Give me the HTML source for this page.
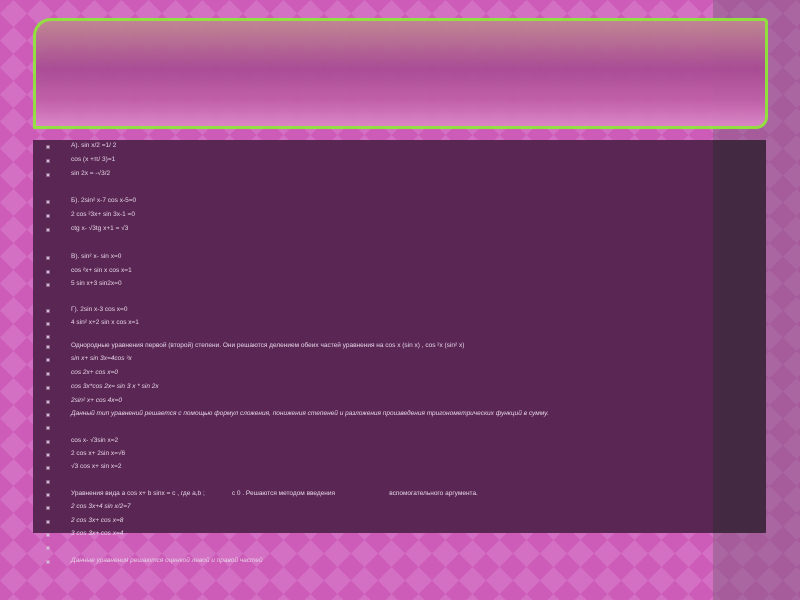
<!DOCTYPE html>
<html><head><meta charset="utf-8"><style>
*{margin:0;padding:0}
body{width:800px;height:600px;overflow:hidden;position:relative;background:#cc5cb8;font-family:"Liberation Sans","DejaVu Sans",sans-serif}
svg.bg{position:absolute;left:0;top:0}
.title{position:absolute;left:33px;top:18px;width:729px;height:105px;border:3px solid #8fe63a;border-radius:18px 4px 12px 0;background:linear-gradient(#c08890,#a84c94 45%,#c060a8 75%,#dc88c8);opacity:.95}
.box{position:absolute;left:33px;top:140px;width:733px;height:393px;background:#5a2755}
.box2{position:absolute;left:713px;top:140px;width:53px;height:393px;background:#432a42}
.band{position:absolute;left:713px;top:0;width:87px;height:600px;background:rgba(120,90,120,.45)}
.l{position:absolute;left:71px;font-size:6.5px;color:#e6d6e6;white-space:nowrap;line-height:8px}
.b{position:absolute;left:47px;width:2px;height:2px;background:#d8c0d8;outline:1px solid rgba(216,192,216,.4)}
i{font-style:italic}
</style></head><body>
<svg class="bg" width="800" height="600"><defs><pattern id="p" width="27" height="27" patternUnits="userSpaceOnUse"><rect width="27" height="27" fill="#cc5cb8"/><path d="M13.5 0L27 13.5 13.5 27 0 13.5Z" fill="#d470c4"/></pattern></defs><rect width="800" height="600" fill="url(#p)"/></svg>
<div class="band"></div>
<div class="title"></div>
<div class="box"></div>
<div class="box2"></div>
<div id="c"></div>
<script>
var L=[[145,"А).  sin x/2 =1/ 2"],[159,"cos  (x +π/ 3)=1"],[173,"sin 2x = -√3/2"],[200,"Б).   2sin² x-7 cos  x-5=0"],[214,"2 cos  ²3x+ sin 3x-1 =0"],[228,"ctg x- √3tg  x+1 = √3"],[256,"В). sin² x- sin x=0"],[270,"cos  ²x+ sin x cos x=1"],[283,"5 sin x+3 sin2x=0"],[309,"Г).  2sin x-3 cos  x=0"],[322,"4 sin² x+2 sin x cos x=1"],[335,""],[345,"Однородные уравнения первой (второй) степени. Они решаются делением обеих частей уравнения на cos x (sin x) , cos ²x (sin² x)"],[358,"<i>sin x+ sin 3x=4cos ³x</i>"],[372,"<i>cos 2x+ cos x=0</i>"],[386,"<i>cos 3x*cos 2x= sin 3 x * sin 2x</i>"],[400,"<i>2sin² x+ cos 4x=0</i>"],[413,"<i>Данный тип уравнений решается с помощью формул сложения, понижения степеней и разложения произведения тригонометрических функций в сумму.</i>"],[426,""],[440,"cos  x- √3sin x=2"],[453,"2 cos  x+ 2sin x=√6"],[466,"√3 cos x+ sin x=2"],[480,""],[493,"Уравнения вида  a cos x+ b sinx = c , где a,b ;&nbsp;&nbsp;&nbsp;&nbsp;&nbsp;&nbsp;&nbsp;&nbsp;&nbsp;&nbsp;&nbsp;&nbsp;&nbsp;&nbsp;&nbsp;c  0 . Решаются методом введения&nbsp;&nbsp;&nbsp;&nbsp;&nbsp;&nbsp;&nbsp;&nbsp;&nbsp;&nbsp;&nbsp;&nbsp;&nbsp;&nbsp;&nbsp;&nbsp;&nbsp;&nbsp;&nbsp;&nbsp;&nbsp;&nbsp;&nbsp;&nbsp;&nbsp;&nbsp;&nbsp;&nbsp;&nbsp;&nbsp;вспомогательного аргумента."],[506,"<i>2 cos 3x+4 sin x/2=7</i>"],[520,"<i>2 cos 3x+ cos x=8</i>"],[533,"<i>3 cos 3x+ cos x=4</i>"],[546,""],[560,"<i>Данные уравнения решаются оценкой левой и правой частей</i>"]];
var h="";L.forEach(function(a){h+='<div class="b" style="top:'+(a[0]+1)+'px"></div><div class="l" style="top:'+(a[0]-3)+'px">'+a[1]+'</div>';});
document.getElementById("c").innerHTML=h;
</script>
</body></html>
